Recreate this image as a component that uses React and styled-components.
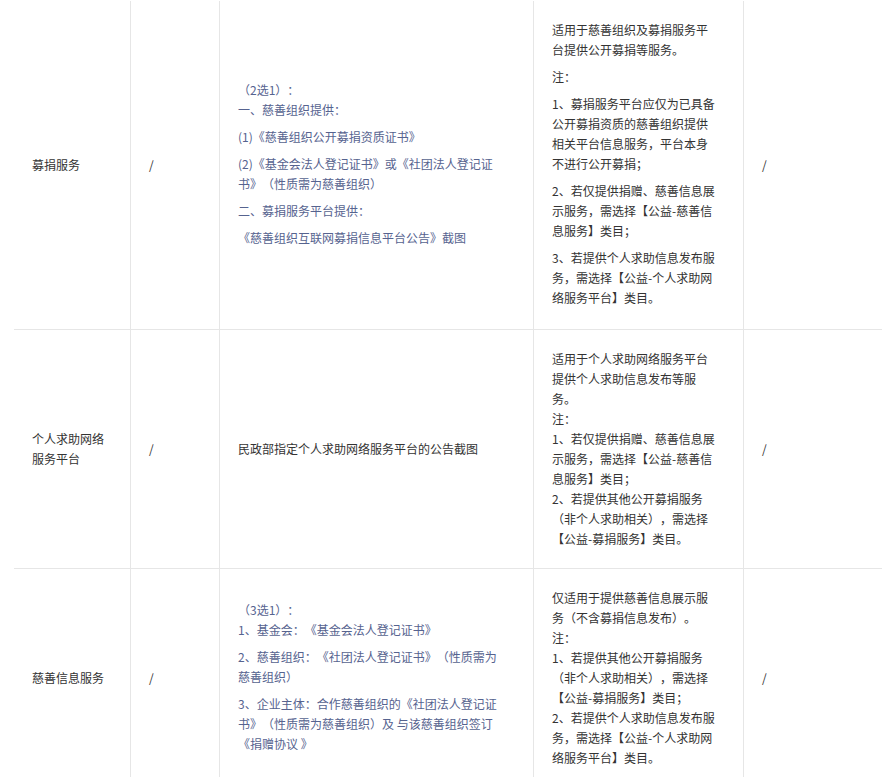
import React from "react";
import styled, { createGlobalStyle } from "styled-components";

const GlobalStyle = createGlobalStyle`
  html, body {
    margin: 0;
    padding: 0;
    background: #fff;
    overflow: hidden;
  }
  body {
    font-family: "Noto Sans CJK SC", "Noto Sans", sans-serif;
    font-size: 12px;
    color: #333;
    text-spacing-trim: space-all;
  }
`;

const Page = styled.div`
  padding: 1px 0 0 14px;
  width: 1000px;
`;

const Table = styled.table`
  table-layout: fixed;
  border-collapse: separate;
  border-spacing: 0;
  width: 930px;
`;

const Col = styled.col`
  width: ${(p) => p.$w}px;
`;

const Row = styled.tr``;

const Cell = styled.td`
  vertical-align: middle;
  padding: 19px ${(p) => p.$pr || 24}px 19px 18px;
  border-right: 1px solid #e6e6e6;
  border-bottom: 1px solid #e6e6e6;
  line-height: 20px;
  color: #333;
`;

const Para = styled.p`
  margin: 0 0 7px;
  color: ${(p) => (p.$muted ? "#56638f" : "#333")};

  &:last-child {
    margin-bottom: 2px;
  }
`;

const Block = styled.div`
  color: ${(p) => (p.$muted ? "#56638f" : "#333")};
`;

const rows = [
  {
    name: "募捐服务",
    material: (
      <>
        <Para $muted>
          （2选1）：
          <br />
          一、慈善组织提供：
        </Para>
        <Para $muted>(1)《慈善组织公开募捐资质证书》</Para>
        <Para $muted>(2)《基金会法人登记证书》或《社团法人登记证书》（性质需为慈善组织）</Para>
        <Para $muted>二、募捐服务平台提供：</Para>
        <Para $muted>《慈善组织互联网募捐信息平台公告》截图</Para>
      </>
    ),
    note: (
      <>
        <Para>适用于慈善组织及募捐服务平台提供公开募捐等服务。</Para>
        <Para>注：</Para>
        <Para>1、募捐服务平台应仅为已具备公开募捐资质的慈善组织提供相关平台信息服务，平台本身不进行公开募捐；</Para>
        <Para>2、若仅提供捐赠、慈善信息展示服务，需选择【公益-慈善信息服务】类目；</Para>
        <Para>3、若提供个人求助信息发布服务，需选择【公益-个人求助网络服务平台】类目。</Para>
      </>
    ),
  },
  {
    name: "个人求助网络服务平台",
    material: <Block>民政部指定个人求助网络服务平台的公告截图</Block>,
    note: (
      <Block>
        适用于个人求助网络服务平台提供个人求助信息发布等服务。
        <br />
        注：
        <br />
        1、若仅提供捐赠、慈善信息展示服务，需选择【公益-慈善信息服务】类目；
        <br />
        2、若提供其他公开募捐服务（非个人求助相关），需选择【公益-募捐服务】类目。
      </Block>
    ),
  },
  {
    name: "慈善信息服务",
    material: (
      <>
        <Para $muted>
          （3选1）：
          <br />
          1、基金会：《基金会法人登记证书》
        </Para>
        <Para $muted>2、慈善组织：《社团法人登记证书》（性质需为慈善组织）</Para>
        <Para $muted>3、企业主体：合作慈善组织的《社团法人登记证书》（性质需为慈善组织）及 与该慈善组织签订《捐赠协议 》</Para>
      </>
    ),
    note: (
      <Block>
        仅适用于提供慈善信息展示服务（不含募捐信息发布）。
        <br />
        注：
        <br />
        1、若提供其他公开募捐服务（非个人求助相关），需选择【公益-募捐服务】类目；
        <br />
        2、若提供个人求助信息发布服务，需选择【公益-个人求助网络服务平台】类目。
      </Block>
    ),
  },
];

export default function App() {
  return (
    <>
      <GlobalStyle />
      <Page>
        <Table>
          <colgroup>
            <Col $w={117} />
            <Col $w={89} />
            <Col $w={314} />
            <Col $w={210} />
            <Col $w={200} />
          </colgroup>
          <tbody>
            {rows.map((r) => (
              <Row key={r.name}>
                <Cell>{r.name}</Cell>
                <Cell>/</Cell>
                <Cell $pr={29}>{r.material}</Cell>
                <Cell $pr={26}>{r.note}</Cell>
                <Cell>/</Cell>
              </Row>
            ))}
          </tbody>
        </Table>
      </Page>
    </>
  );
}
